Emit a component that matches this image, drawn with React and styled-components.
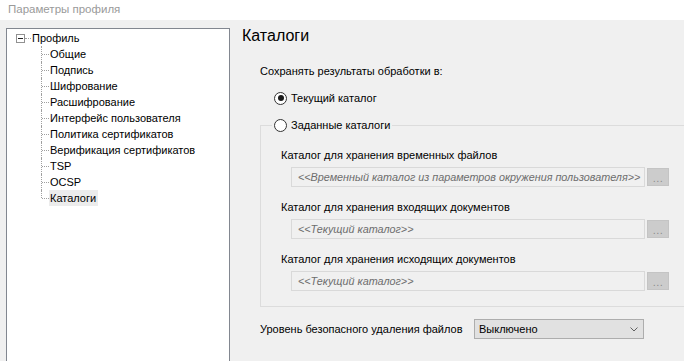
import React from "react";
import styled, { createGlobalStyle } from "styled-components";

const GlobalStyle = createGlobalStyle`
	html, body {
		margin: 0;
		padding: 0;
		background: #f0f0f0;
		overflow: hidden;
	}
	body {
		font-family: "Liberation Sans", Arial, sans-serif;
		font-size: 11px;
		color: #000;
	}
`;

const treeItems = [
	"Общие",
	"Подпись",
	"Шифрование",
	"Расшифрование",
	"Интерфейс пользователя",
	"Политика сертификатов",
	"Верификация сертификатов",
	"TSP",
	"OCSP",
	"Каталоги",
];

const folders = [
	{ label: "Каталог для хранения временных файлов", value: "<<Временный каталог из параметров окружения пользователя>>" },
	{ label: "Каталог для хранения входящих документов", value: "<<Текущий каталог>>" },
	{ label: "Каталог для хранения исходящих документов", value: "<<Текущий каталог>>" },
];

const Window = styled.div`
	width: 684px;
	height: 361px;
	overflow: hidden;
`;

const TitleBar = styled.div`
	height: 20px;
	line-height: 18px;
	padding-left: 8px;
	background: #fff;
	color: #9a9a9a;
	font-size: 11.5px;
`;

const Content = styled.div`
	display: flex;
	gap: 12px;
`;

const TreePanel = styled.div`
	margin: 8px 0 0 6px;
	width: 222px;
	height: 340px;
	padding-top: 1px;
	border: 1px solid #828790;
	background: #fff;
	flex-shrink: 0;
`;

const TreeRow = styled.div`
	display: flex;
	align-items: center;
	height: 16px;
	padding-left: ${ ( p ) => p.indent }px;
`;

const Expander = styled.span`
	position: relative;
	width: 9px;
	height: 9px;
	box-sizing: border-box;
	border: 1px solid #919191;
	background: #fff;

	&::after {
		content: "";
		position: absolute;
		left: 1px;
		top: 3px;
		width: 5px;
		height: 1px;
		background: #222;
	}
`;

const RootDots = styled.span`
	width: 6px;
	border-top: 1px dotted #a0a0a0;
`;

const Connector = styled.span`
	position: relative;
	align-self: stretch;
	width: 8px;

	&::before {
		content: "";
		position: absolute;
		left: 0;
		top: 0;
		height: ${ ( p ) => ( p.last ? "8px" : "16px" ) };
		border-left: 1px dotted #a0a0a0;
	}

	&::after {
		content: "";
		position: absolute;
		left: 1px;
		top: 8px;
		width: 7px;
		border-top: 1px dotted #a0a0a0;
	}
`;

const TreeLabel = styled.span`
	line-height: 16px;
	padding: 0 2px 0 1px;
	background: ${ ( p ) => ( p.selected ? "#ececec" : "transparent" ) };
	white-space: nowrap;
`;

const RightPanel = styled.div`
	flex: 1;
	display: flex;
	flex-direction: column;
	padding-top: 6px;
	min-width: 0;
`;

const Heading = styled.h1`
	margin: 0;
	font-size: 16px;
	font-weight: normal;
	line-height: 20px;
`;

const Prompt = styled.div`
	margin-top: 17px;
	padding-left: 18px;
	line-height: 16px;
`;

const RadioRow = styled.label`
	display: flex;
	align-items: center;
	gap: 4px;
	height: 16px;
	line-height: 16px;
	margin-top: ${ ( p ) => p.offset || 0 }px;
	padding-left: ${ ( p ) => p.indent || 0 }px;
	white-space: nowrap;
`;

const RadioCircle = styled.span`
	position: relative;
	width: 13px;
	height: 13px;
	box-sizing: border-box;
	border-radius: 50%;
	border: 1px solid #333;
	background: #fff;

	&::after {
		content: "";
		display: ${ ( p ) => ( p.checked ? "block" : "none" ) };
		position: absolute;
		left: 2.5px;
		top: 2.5px;
		width: 6px;
		height: 6px;
		border-radius: 50%;
		background: #1a1a1a;
	}
`;

const GroupBox = styled.fieldset`
	margin: 11px -40px 0 18px;
	padding: 0;
	border: 1px solid #dcdcdc;
	min-width: 0;
`;

const GroupLegend = styled.legend`
	margin-left: 11px;
	padding: 0 2px;
`;

const GroupBody = styled.div`
	padding: 14px 0 15px 20px;
`;

const FieldLabel = styled.div`
	line-height: 16px;
	margin-top: ${ ( p ) => ( p.first ? 0 : 12 ) }px;
	margin-bottom: 4px;
`;

const FieldRow = styled.div`
	display: flex;
	gap: 2px;
	margin-left: 10px;
`;

const PathField = styled.div`
	width: 354px;
	height: 20px;
	box-sizing: border-box;
	padding-left: 6px;
	border: 1px solid #d9d9d9;
	background: #f0f0f0;
	color: #6d6d6d;
	font-size: 10.8px;
	font-style: italic;
	line-height: 18px;
	white-space: nowrap;
	overflow: hidden;
`;

const BrowseButton = styled.div`
	width: 22px;
	height: 18px;
	margin-top: 1px;
	box-sizing: border-box;
	border: 1px solid #c4c4c4;
	background: #cccccc;
	color: #8c8c8c;
	font-size: 11px;
	line-height: 18px;
	text-align: center;
	letter-spacing: 0.5px;
`;

const WipeRow = styled.div`
	display: flex;
	align-items: center;
	margin-top: 12px;
	padding-left: 18px;
`;

const WipeLabel = styled.span`
	width: 214px;
	line-height: 16px;
	white-space: nowrap;
`;

const Select = styled.div`
	display: flex;
	align-items: center;
	justify-content: space-between;
	width: 170px;
	height: 20px;
	box-sizing: border-box;
	padding: 0 5px 0 4px;
	border: 1px solid #adadad;
	background: #e1e1e1;
	line-height: 18px;
`;

const Chevron = () => (
	<svg width="8" height="5" viewBox="0 0 8 5">
		<path d="M0.5 0.5 L4 4 L7.5 0.5" fill="none" stroke="#606060" strokeWidth="1" />
	</svg>
);

export default function App() {
	return (
		<Window>
			<GlobalStyle />
			<TitleBar>Параметры профиля</TitleBar>
			<Content>
				<TreePanel>
					<TreeRow indent={ 9 }>
						<Expander />
						<RootDots />
						<TreeLabel>Профиль</TreeLabel>
					</TreeRow>
					{ treeItems.map( ( item, i ) => (
						<TreeRow indent={ 34 } key={ item }>
							<Connector last={ i === treeItems.length - 1 } />
							<TreeLabel selected={ item === "Каталоги" }>{ item }</TreeLabel>
						</TreeRow>
					) ) }
				</TreePanel>
				<RightPanel>
					<Heading>Каталоги</Heading>
					<Prompt>Сохранять результаты обработки в:</Prompt>
					<RadioRow offset={ 11 } indent={ 32 }>
						<RadioCircle checked />
						Текущий каталог
					</RadioRow>
					<GroupBox>
						<GroupLegend>
							<RadioRow>
								<RadioCircle />
								Заданные каталоги
							</RadioRow>
						</GroupLegend>
						<GroupBody>
							{ folders.map( ( f, i ) => (
								<React.Fragment key={ f.label }>
									<FieldLabel first={ i === 0 }>{ f.label }</FieldLabel>
									<FieldRow>
										<PathField>{ f.value }</PathField>
										<BrowseButton>...</BrowseButton>
									</FieldRow>
								</React.Fragment>
							) ) }
						</GroupBody>
					</GroupBox>
					<WipeRow>
						<WipeLabel>Уровень безопасного удаления файлов</WipeLabel>
						<Select>
							<span>Выключено</span>
							<Chevron />
						</Select>
					</WipeRow>
				</RightPanel>
			</Content>
		</Window>
	);
}
